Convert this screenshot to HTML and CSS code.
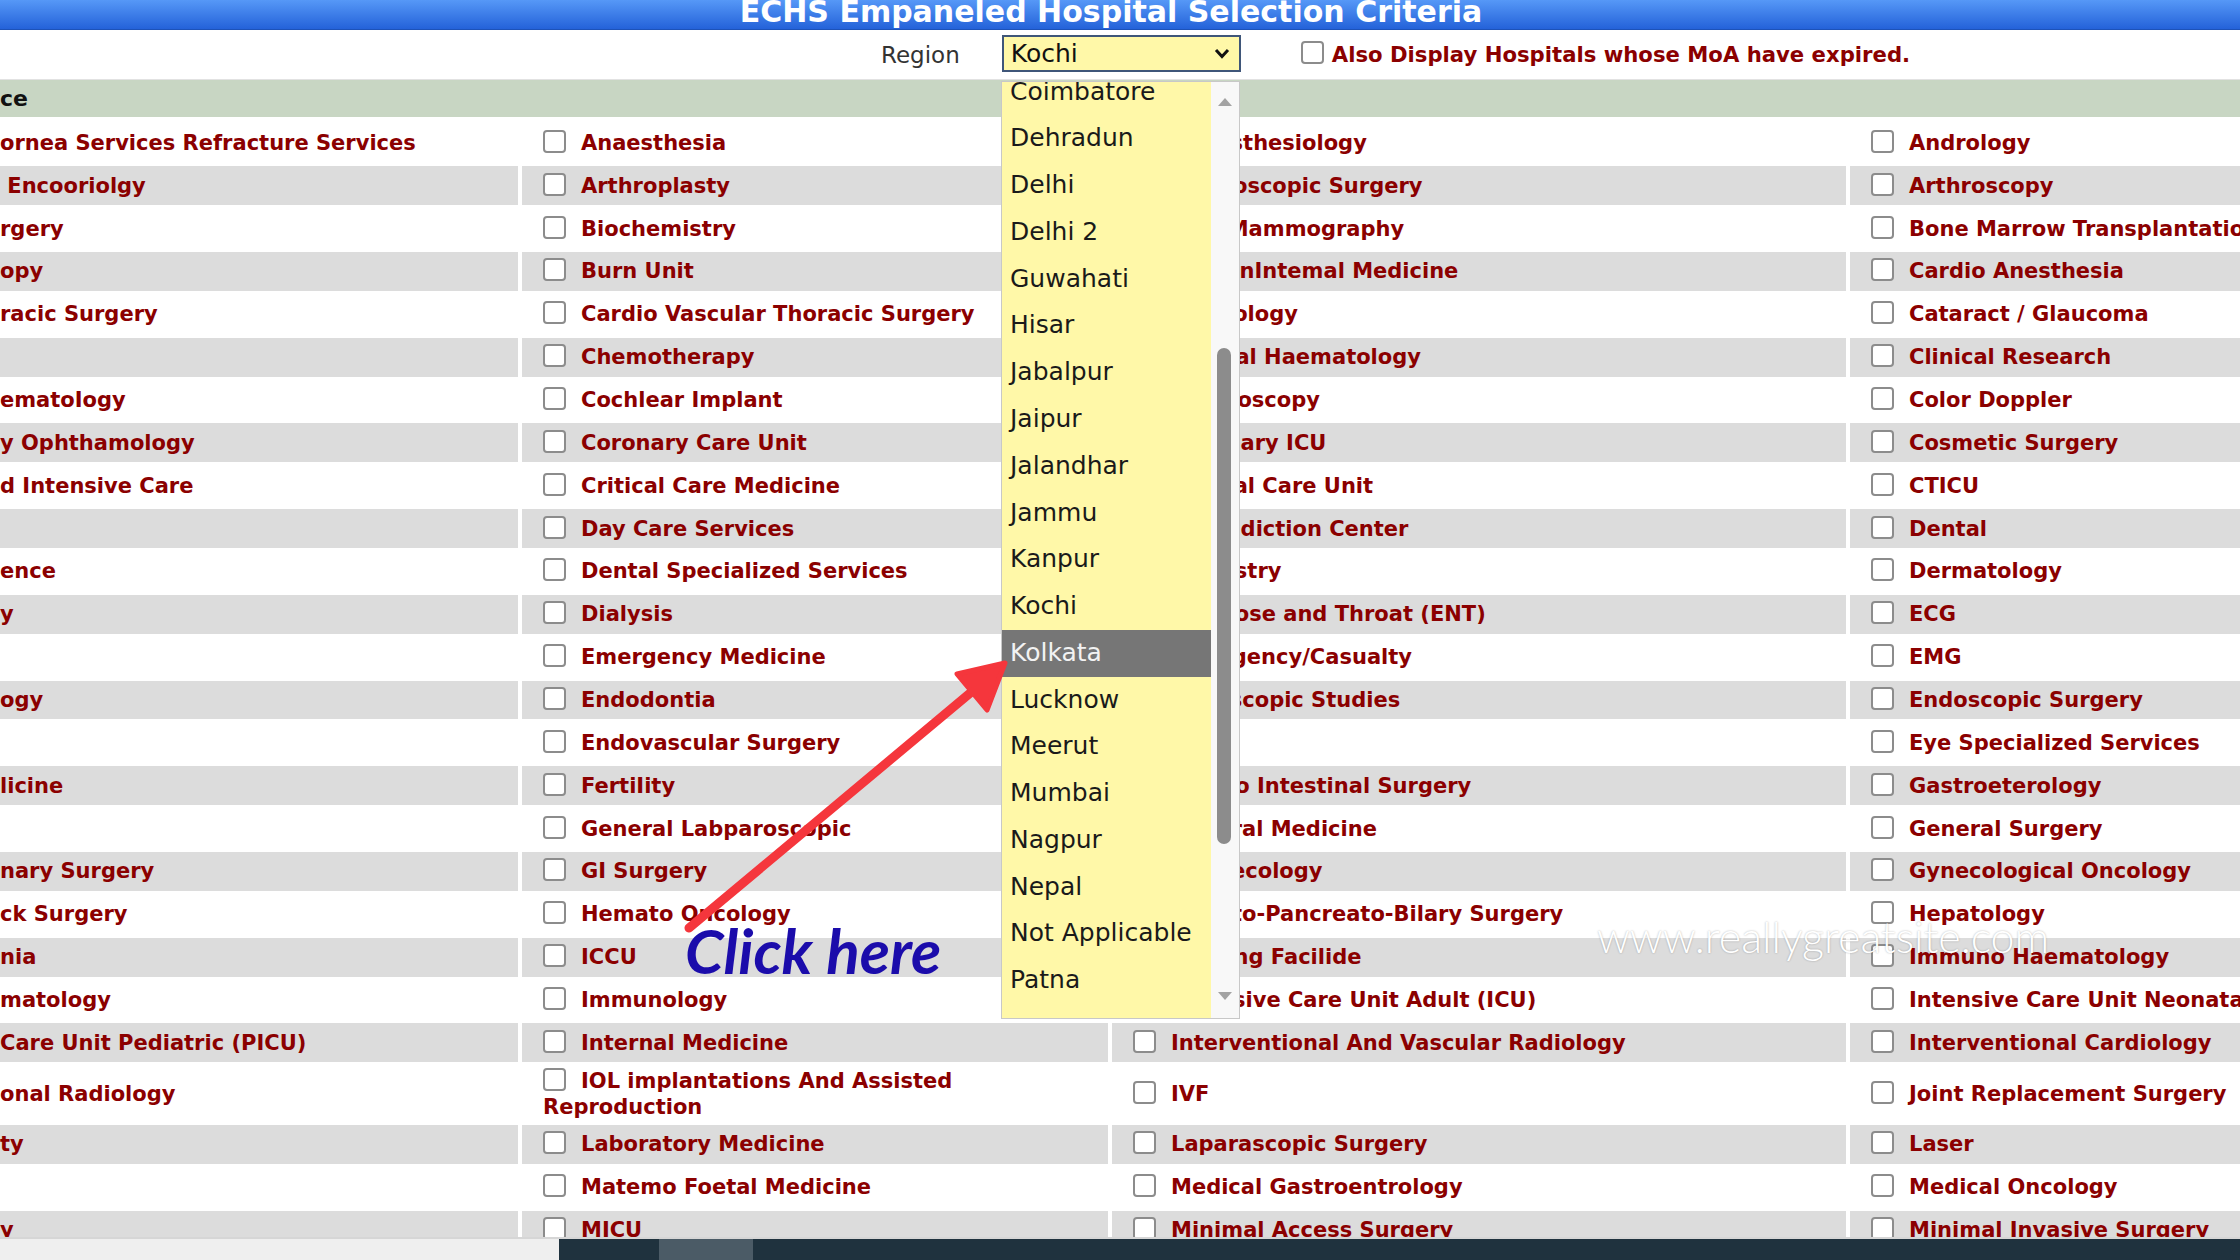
FILE: index.html
```html
<!DOCTYPE html>
<html lang="en">
<head>
    <meta charset="UTF-8">
    <title>ECHS Empaneled Hospital Selection Criteria</title>
    <link rel="stylesheet" href="styles.css">
</head>
<body>
    <div class="title-bar">ECHS Empaneled Hospital Selection Criteria</div>

    <div class="filters">
        <span class="caption">Region</span>
        <div class="region-select">
            <span>Kochi</span>
            <svg width="16" height="11" viewBox="0 0 16 11"><path d="M2 2 L8 8.5 L14 2" fill="none" stroke="#111" stroke-width="3"/></svg>
        </div>
        <label class="expired"><input type="checkbox" class="box">Also Display Hospitals whose MoA have expired.</label>
    </div>

    <div class="section-head">ce</div>

    <div class="specialities">
        <div class="grid">
            <div class="row">
                <div class="cell edge">ornea Services Refracture Services</div>
                <div class="cell"><div class="opt"><input type="checkbox" class="box">Anaesthesia</div></div>
                <div class="cell"><div class="opt"><input type="checkbox" class="box">Anaesthesiology</div></div>
                <div class="cell"><div class="opt"><input type="checkbox" class="box">Andrology</div></div>
            </div>
            <div class="row">
                <div class="cell edge">&nbsp;Encooriolgy</div>
                <div class="cell"><div class="opt"><input type="checkbox" class="box">Arthroplasty</div></div>
                <div class="cell"><div class="opt"><input type="checkbox" class="box">Arthroscopic Surgery</div></div>
                <div class="cell"><div class="opt"><input type="checkbox" class="box">Arthroscopy</div></div>
            </div>
            <div class="row">
                <div class="cell edge">rgery</div>
                <div class="cell"><div class="opt"><input type="checkbox" class="box">Biochemistry</div></div>
                <div class="cell"><div class="opt"><input type="checkbox" class="box">USG Mammography</div></div>
                <div class="cell"><div class="opt"><input type="checkbox" class="box">Bone Marrow Transplantation</div></div>
            </div>
            <div class="row">
                <div class="cell edge">opy</div>
                <div class="cell"><div class="opt"><input type="checkbox" class="box">Burn Unit</div></div>
                <div class="cell"><div class="opt"><input type="checkbox" class="box">HumanIntemal Medicine</div></div>
                <div class="cell"><div class="opt"><input type="checkbox" class="box">Cardio Anesthesia</div></div>
            </div>
            <div class="row">
                <div class="cell edge">racic Surgery</div>
                <div class="cell"><div class="opt"><input type="checkbox" class="box">Cardio Vascular Thoracic Surgery</div></div>
                <div class="cell"><div class="opt"><input type="checkbox" class="box">Cardiology</div></div>
                <div class="cell"><div class="opt"><input type="checkbox" class="box">Cataract / Glaucoma</div></div>
            </div>
            <div class="row">
                <div class="cell edge"></div>
                <div class="cell"><div class="opt"><input type="checkbox" class="box">Chemotherapy</div></div>
                <div class="cell"><div class="opt"><input type="checkbox" class="box">Clinical Haematology</div></div>
                <div class="cell"><div class="opt"><input type="checkbox" class="box">Clinical Research</div></div>
            </div>
            <div class="row">
                <div class="cell edge">ematoIogy</div>
                <div class="cell"><div class="opt"><input type="checkbox" class="box">Cochlear Implant</div></div>
                <div class="cell"><div class="opt"><input type="checkbox" class="box">Colonoscopy</div></div>
                <div class="cell"><div class="opt"><input type="checkbox" class="box">Color Doppler</div></div>
            </div>
            <div class="row">
                <div class="cell edge">y Ophthamology</div>
                <div class="cell"><div class="opt"><input type="checkbox" class="box">Coronary Care Unit</div></div>
                <div class="cell"><div class="opt"><input type="checkbox" class="box">Coronary ICU</div></div>
                <div class="cell"><div class="opt"><input type="checkbox" class="box">Cosmetic Surgery</div></div>
            </div>
            <div class="row">
                <div class="cell edge">d Intensive Care</div>
                <div class="cell"><div class="opt"><input type="checkbox" class="box">Critical Care Medicine</div></div>
                <div class="cell"><div class="opt"><input type="checkbox" class="box">Critical Care Unit</div></div>
                <div class="cell"><div class="opt"><input type="checkbox" class="box">CTICU</div></div>
            </div>
            <div class="row">
                <div class="cell edge"></div>
                <div class="cell"><div class="opt"><input type="checkbox" class="box">Day Care Services</div></div>
                <div class="cell"><div class="opt"><input type="checkbox" class="box">De-addiction Center</div></div>
                <div class="cell"><div class="opt"><input type="checkbox" class="box">Dental</div></div>
            </div>
            <div class="row">
                <div class="cell edge">ence</div>
                <div class="cell"><div class="opt"><input type="checkbox" class="box">Dental Specialized Services</div></div>
                <div class="cell"><div class="opt"><input type="checkbox" class="box">Dentistry</div></div>
                <div class="cell"><div class="opt"><input type="checkbox" class="box">Dermatology</div></div>
            </div>
            <div class="row">
                <div class="cell edge">y</div>
                <div class="cell"><div class="opt"><input type="checkbox" class="box">Dialysis</div></div>
                <div class="cell"><div class="opt"><input type="checkbox" class="box">Ear Nose and Throat (ENT)</div></div>
                <div class="cell"><div class="opt"><input type="checkbox" class="box">ECG</div></div>
            </div>
            <div class="row">
                <div class="cell edge"></div>
                <div class="cell"><div class="opt"><input type="checkbox" class="box">Emergency Medicine</div></div>
                <div class="cell"><div class="opt"><input type="checkbox" class="box">Emergency/Casualty</div></div>
                <div class="cell"><div class="opt"><input type="checkbox" class="box">EMG</div></div>
            </div>
            <div class="row">
                <div class="cell edge">ogy</div>
                <div class="cell"><div class="opt"><input type="checkbox" class="box">Endodontia</div></div>
                <div class="cell"><div class="opt"><input type="checkbox" class="box">Endoscopic Studies</div></div>
                <div class="cell"><div class="opt"><input type="checkbox" class="box">Endoscopic Surgery</div></div>
            </div>
            <div class="row">
                <div class="cell edge"></div>
                <div class="cell"><div class="opt"><input type="checkbox" class="box">Endovascular Surgery</div></div>
                <div class="cell"><div class="opt"><input type="checkbox" class="box">Eye</div></div>
                <div class="cell"><div class="opt"><input type="checkbox" class="box">Eye Specialized Services</div></div>
            </div>
            <div class="row">
                <div class="cell edge">licine</div>
                <div class="cell"><div class="opt"><input type="checkbox" class="box">FertiIity</div></div>
                <div class="cell"><div class="opt"><input type="checkbox" class="box">Gastro Intestinal Surgery</div></div>
                <div class="cell"><div class="opt"><input type="checkbox" class="box">Gastroeterology</div></div>
            </div>
            <div class="row">
                <div class="cell edge"></div>
                <div class="cell"><div class="opt"><input type="checkbox" class="box">General Labparoscopic</div></div>
                <div class="cell"><div class="opt"><input type="checkbox" class="box">General Medicine</div></div>
                <div class="cell"><div class="opt"><input type="checkbox" class="box">General Surgery</div></div>
            </div>
            <div class="row">
                <div class="cell edge">nary Surgery</div>
                <div class="cell"><div class="opt"><input type="checkbox" class="box">GI Surgery</div></div>
                <div class="cell"><div class="opt"><input type="checkbox" class="box">Gynaecology</div></div>
                <div class="cell"><div class="opt"><input type="checkbox" class="box">Gynecological Oncology</div></div>
            </div>
            <div class="row">
                <div class="cell edge">ck Surgery</div>
                <div class="cell"><div class="opt"><input type="checkbox" class="box">Hemato Oncology</div></div>
                <div class="cell"><div class="opt"><input type="checkbox" class="box">Hepato-Pancreato-Bilary Surgery</div></div>
                <div class="cell"><div class="opt"><input type="checkbox" class="box">Hepatology</div></div>
            </div>
            <div class="row">
                <div class="cell edge">nia</div>
                <div class="cell"><div class="opt"><input type="checkbox" class="box">ICCU</div></div>
                <div class="cell"><div class="opt"><input type="checkbox" class="box">Nursing Facilide</div></div>
                <div class="cell"><div class="opt"><input type="checkbox" class="box">Immuno Haematology</div></div>
            </div>
            <div class="row">
                <div class="cell edge">matology</div>
                <div class="cell"><div class="opt"><input type="checkbox" class="box">Immunology</div></div>
                <div class="cell"><div class="opt"><input type="checkbox" class="box">Intensive Care Unit Adult (ICU)</div></div>
                <div class="cell"><div class="opt"><input type="checkbox" class="box">Intensive Care Unit Neonatal</div></div>
            </div>
            <div class="row">
                <div class="cell edge">Care Unit Pediatric (PICU)</div>
                <div class="cell"><div class="opt"><input type="checkbox" class="box">Internal Medicine</div></div>
                <div class="cell"><div class="opt"><input type="checkbox" class="box">Interventional And Vascular Radiology</div></div>
                <div class="cell"><div class="opt"><input type="checkbox" class="box">Interventional Cardiology</div></div>
            </div>
            <div class="row">
                <div class="cell edge">onal Radiology</div>
                <div class="cell wrap"><div class="opt"><input type="checkbox" class="box">IOL implantations And Assisted Reproduction</div></div>
                <div class="cell"><div class="opt"><input type="checkbox" class="box">IVF</div></div>
                <div class="cell"><div class="opt"><input type="checkbox" class="box">Joint Replacement Surgery</div></div>
            </div>
            <div class="row">
                <div class="cell edge">ty</div>
                <div class="cell"><div class="opt"><input type="checkbox" class="box">Laboratory Medicine</div></div>
                <div class="cell"><div class="opt"><input type="checkbox" class="box">Laparascopic Surgery</div></div>
                <div class="cell"><div class="opt"><input type="checkbox" class="box">Laser</div></div>
            </div>
            <div class="row">
                <div class="cell edge"></div>
                <div class="cell"><div class="opt"><input type="checkbox" class="box">Matemo Foetal Medicine</div></div>
                <div class="cell"><div class="opt"><input type="checkbox" class="box">Medical Gastroentrology</div></div>
                <div class="cell"><div class="opt"><input type="checkbox" class="box">Medical Oncology</div></div>
            </div>
            <div class="row">
                <div class="cell edge">y</div>
                <div class="cell"><div class="opt"><input type="checkbox" class="box">MICU</div></div>
                <div class="cell"><div class="opt"><input type="checkbox" class="box">Minimal Access Surgery</div></div>
                <div class="cell"><div class="opt"><input type="checkbox" class="box">Minimal Invasive Surgery</div></div>
            </div>
        </div>
    </div>

    <div class="taskbar">
        <div class="pane-light"></div>
        <div class="pane-dark"><div class="pane-tab"></div></div>
    </div>

    <!-- open region list -->
    <div class="region-list">
        <ul>
            <li>Coimbatore</li>
            <li>Dehradun</li>
            <li>Delhi</li>
            <li>Delhi 2</li>
            <li>Guwahati</li>
            <li>Hisar</li>
            <li>Jabalpur</li>
            <li>Jaipur</li>
            <li>Jalandhar</li>
            <li>Jammu</li>
            <li>Kanpur</li>
            <li>Kochi</li>
            <li class="hover">Kolkata</li>
            <li>Lucknow</li>
            <li>Meerut</li>
            <li>Mumbai</li>
            <li>Nagpur</li>
            <li>Nepal</li>
            <li>Not Applicable</li>
            <li>Patna</li>
        </ul>
        <div class="scrollbar">
            <span class="arrow up"></span>
            <span class="thumb"></span>
            <span class="arrow down"></span>
        </div>
    </div>

    <!-- pointer to the list -->
    <svg class="pointer" width="2240" height="1260" viewBox="0 0 2240 1260">
        <line x1="689" y1="928" x2="975" y2="689" stroke="#f5363c" stroke-width="9" stroke-linecap="round"/>
        <polygon points="1005,663 957,674 987,710" fill="#f5363c" stroke="#f5363c" stroke-width="5" stroke-linejoin="round"/>
    </svg>
    <div class="hint">Click here</div>
    <div class="site-mark">www.reallygreatsite.com</div>
</body>
</html>
```

FILE: styles.css
```css
* {
    box-sizing: border-box;
}

body {
    margin: 0;
    width: 2240px;
    height: 1260px;
    overflow: hidden;
    position: relative;
    background: #fff;
    font-family: "DejaVu Sans", Verdana, sans-serif;
}

.title-bar {
    height: 30px;
    background: linear-gradient(#5698f7, #2462d9);
    border-bottom: 1px solid #1d52b8;
    color: #fff;
    font-size: 30px;
    font-weight: bold;
    line-height: 24px;
    text-align: center;
    padding-right: 18px;
    white-space: nowrap;
    overflow: hidden;
}

.filters {
    height: 50px;
    display: flex;
    align-items: center;
    padding-left: 881px;
    border-bottom: 1px solid #e2e2e2;
}

.caption {
    font-size: 23px;
    color: #333;
    margin-right: 42px;
}

.region-select {
    width: 239px;
    height: 37px;
    margin-top: -3px;
    border: 2px solid #3f5679;
    background: #fff8a8;
    display: flex;
    align-items: center;
    justify-content: space-between;
    padding: 0 9px 0 7px;
    font-size: 25px;
    color: #111;
}

.expired {
    margin-left: 60px;
    display: flex;
    align-items: center;
    color: #8b0000;
    font-size: 21.2px;
    font-weight: bold;
}

.box {
    appearance: none;
    width: 23px;
    height: 23px;
    margin: 0 15px 0 0;
    border: 2px solid #8c8c8c;
    border-radius: 4px;
    background: #fff;
    vertical-align: -3px;
}

.expired .box {
    margin-right: 8px;
    margin-top: -4px;
}

.section-head {
    height: 37px;
    background: #c8d6c3;
    font-size: 22px;
    font-weight: bold;
    line-height: 37px;
    color: #111;
}

.specialities {
    height: 1120px;
    overflow: hidden;
    padding-top: 6.4px;
}

.grid {
    display: grid;
    grid-template-columns: 518px 586px 734px 1fr;
    grid-auto-rows: minmax(38.86px, auto);
    gap: 4px;
}

.row {
    display: contents;
}

.cell {
    display: flex;
    align-items: center;
    padding: 1.3px 0 1.3px 21px;
    overflow: hidden;
    white-space: nowrap;
    color: #8b0000;
    font-size: 21px;
    font-weight: bold;
    line-height: 26px;
}

.cell.edge {
    padding-left: 0;
}

.cell.wrap {
    white-space: normal;
}

.row:nth-child(even) .cell {
    background: #dcdcdc;
}

.taskbar {
    height: 23px;
    display: flex;
    border-top: 2px solid #d6d6d6;
}

.pane-light {
    width: 559px;
    background: #efefef;
}

.pane-dark {
    flex: 1;
    background: #1f323e;
    padding-left: 100px;
}

.pane-tab {
    width: 94px;
    height: 100%;
    background: #4b5b66;
}

/* dropdown list opened under the select */
.region-list {
    position: absolute;
    left: 1001px;
    top: 81px;
    width: 239px;
    height: 938px;
    display: flex;
    border: 1px solid #c8c8c8;
    background: #f8f8f8;
}

.region-list ul {
    list-style: none;
    margin: 0;
    padding: 0;
    flex: 1;
    background: #fff8a8;
    overflow: hidden;
}

.region-list li {
    height: 46.77px;
    line-height: 46.77px;
    padding-left: 8px;
    font-size: 25px;
    color: #1a1a1a;
}

.region-list li:first-child {
    margin-top: -13.4px;
}

.region-list li.hover {
    background: #767676;
    color: #f2f2f2;
}

.scrollbar {
    width: 28px;
    position: relative;
    background: #f8f8f8;
}

.thumb {
    position: absolute;
    left: 6px;
    top: 266px;
    width: 14px;
    height: 496px;
    border-radius: 7px;
    background: #8c8c8c;
}

.arrow {
    position: absolute;
    left: 7px;
    width: 0;
    height: 0;
    border-left: 7px solid transparent;
    border-right: 7px solid transparent;
}

.arrow.up {
    top: 16px;
    border-bottom: 8px solid #a3a3a3;
}

.arrow.down {
    bottom: 18px;
    border-top: 8px solid #a3a3a3;
}

.pointer {
    position: absolute;
    left: 0;
    top: 0;
    pointer-events: none;
}

.hint {
    position: absolute;
    left: 685px;
    top: 919px;
    font-family: Lato, "Open Sans", sans-serif;
    font-size: 62px;
    font-weight: bold;
    font-style: italic;
    line-height: 62px;
    color: #1b0cab;
}

.site-mark {
    position: absolute;
    left: 1597px;
    top: 914px;
    font-family: Lato, "Open Sans", sans-serif;
    font-size: 43px;
    font-weight: 300;
    line-height: 46px;
    color: #fff;
    text-shadow: 0 0 2px rgba(0, 0, 0, 0.3);
}
```
